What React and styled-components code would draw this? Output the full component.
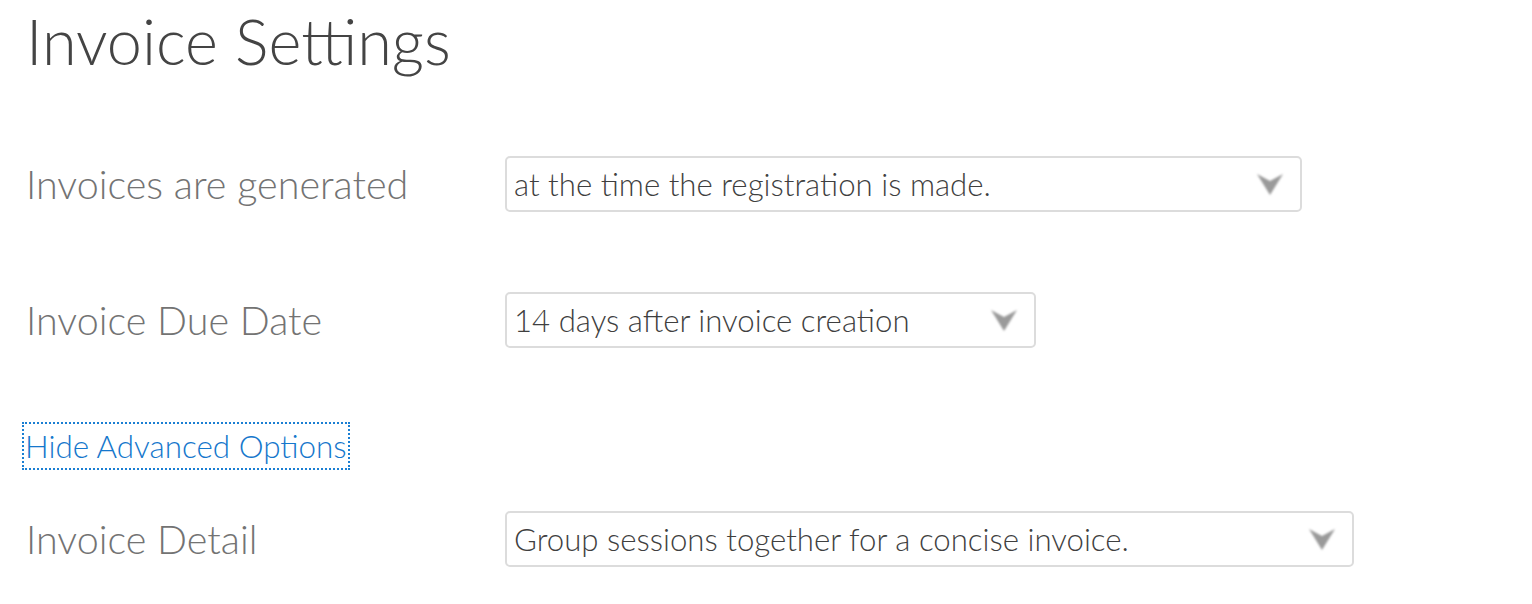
import React from "react";
import styled, { createGlobalStyle } from "styled-components";

const GlobalStyle = createGlobalStyle`
  html, body {
    margin: 0;
    padding: 0;
    background: #ffffff;
    font-family: Lato, "Open Sans", sans-serif;
  }
`;

const Page = styled.div`
  padding: 0 0 0 26px;
  width: 1532px;
  height: 604px;
  box-sizing: border-box;
  overflow: hidden;
`;

const Title = styled.h1`
  margin: 0;
  padding-top: 5px;
  font-size: 63px;
  line-height: 72px;
  font-weight: 300;
  color: #444444;
`;

const Row = styled.div`
  display: flex;
  align-items: center;
  margin-top: ${({ $top }) => $top}px;
  height: 56px;
`;

const Label = styled.label`
  width: 479px;
  flex: none;
  font-size: 39.5px;
  color: #737373;
  font-weight: 300;
  margin-top: -2px;
`;

const SelectBox = styled.div`
  display: flex;
  align-items: center;
  justify-content: space-between;
  width: ${({ $width }) => $width}px;
  height: 56px;
  box-sizing: border-box;
  border: 2px solid #dcdcdc;
  border-radius: 5px;
  padding: 0 14px 0 7px;
  font-size: 31.2px;
  font-weight: 300;
  color: #3f3f3f;
  background: #fff;
`;

const LinkWrap = styled.div`
  margin-top: 76px;
  margin-left: -2px;
`;

const AdvancedLink = styled.a`
  display: inline-block;
  font-size: 31.4px;
  line-height: 44px;
  padding: 0 1px;
  font-weight: 300;
  color: #1577cc;
  text-decoration: none;
  outline: 2px dotted #1a7fd3;
  outline-offset: 0;
  cursor: pointer;
`;

function Arrow() {
  return (
    <svg width="32" height="28" viewBox="0 0 32 28">
      <defs>
        <filter id="blur" x="-20%" y="-20%" width="140%" height="140%">
          <feGaussianBlur stdDeviation="1.3" />
        </filter>
      </defs>
      <polygon
        points="3,4 16,11 29,4 16,25"
        fill="#9a9a9a"
        filter="url(#blur)"
      />
    </svg>
  );
}

function Select({ width, children }) {
  return (
    <SelectBox $width={width}>
      <span>{children}</span>
      <Arrow />
    </SelectBox>
  );
}

export default function App() {
  return (
    <>
      <GlobalStyle />
      <Page>
        <Title>Invoice Settings</Title>
        <Row $top={79}>
          <Label>Invoices are generated</Label>
          <Select width={797}>at the time the registration is made.</Select>
        </Row>
        <Row $top={80}>
          <Label>Invoice Due Date</Label>
          <Select width={531}>14 days after invoice creation</Select>
        </Row>
        <LinkWrap>
          <AdvancedLink>Hide Advanced Options</AdvancedLink>
        </LinkWrap>
        <Row $top={43}>
          <Label>Invoice Detail</Label>
          <Select width={849}>Group sessions together for a concise invoice.</Select>
        </Row>
      </Page>
    </>
  );
}
